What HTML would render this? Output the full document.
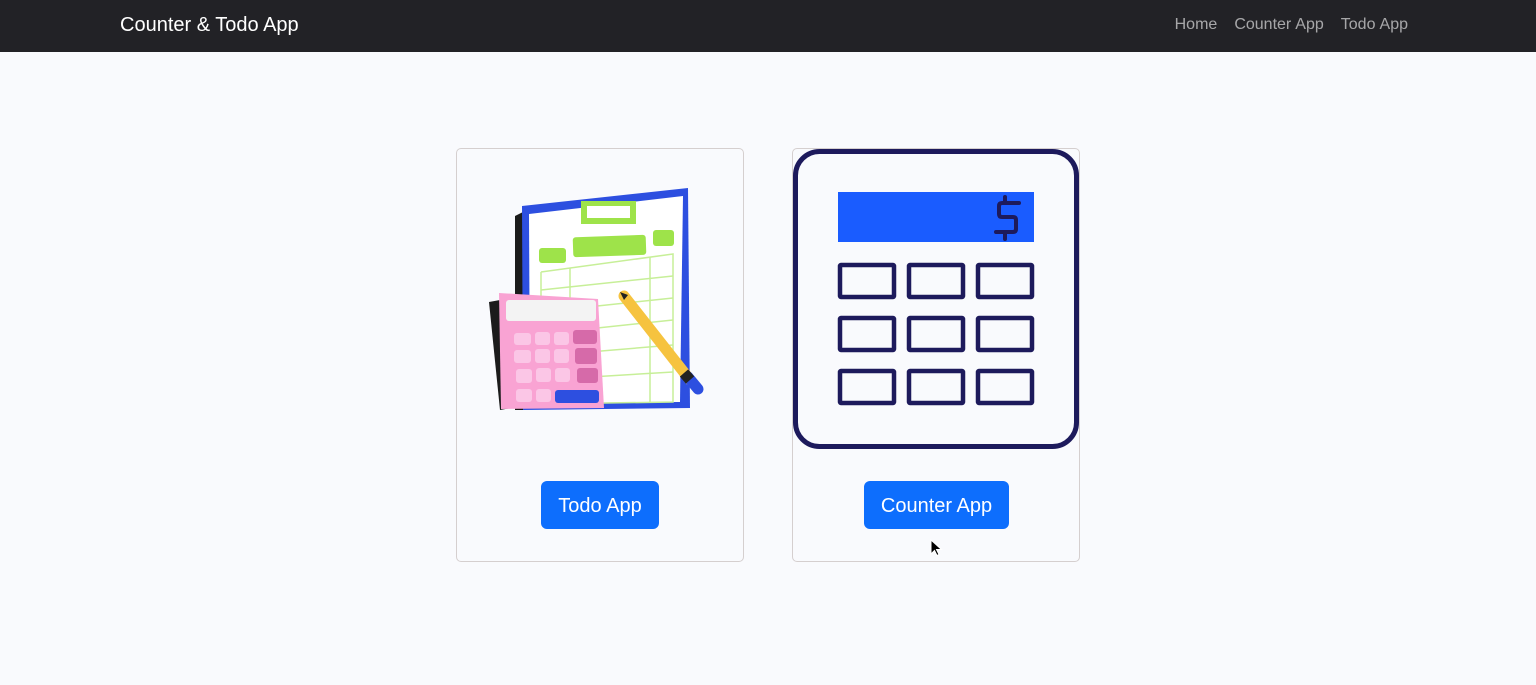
<!DOCTYPE html>
<html><head><meta charset="utf-8"><style>
*{margin:0;padding:0;box-sizing:border-box}
body{width:1536px;height:685px;background:#f9fafd;font-family:"Liberation Sans",sans-serif;position:relative;overflow:hidden}
.nav{position:absolute;left:0;top:0;width:1536px;height:52px;background:#222226}
.brand{position:absolute;left:120px;top:14px;color:#fff;font-size:20px}
.links{position:absolute;right:128px;top:16px;color:rgba(255,255,255,.6);font-size:16px;word-spacing:0.5px}
.links span{margin-left:17px}
.card{position:absolute;top:148px;width:288px;height:414px;border:1px solid #d5cfcf;border-radius:5px}
.btn{position:absolute;top:481px;height:48px;background:#0d6efd;color:#fff;font-size:20px;border-radius:6px;text-align:center;line-height:50px}
svg{position:absolute;left:0;top:0}
</style></head><body>
<div class="nav"><div class="brand">Counter &amp; Todo App</div>
<div class="links"><span>Home</span><span>Counter App</span><span>Todo App</span></div></div>
<div class="card" style="left:456px"></div>
<div class="card" style="left:792px"></div>
<svg width="1536" height="685">
<polygon points="515,216 523,212 523,410 515,410" fill="#1b1b1b"/>
<polygon points="522,206 688,188 690,408 523,410" fill="#2d4fe0"/>
<polygon points="529,214 683,196 680,402 530,403" fill="#fff"/>
<rect x="581" y="201" width="55" height="23" fill="#9ee34a"/>
<rect x="587" y="206" width="43" height="12" fill="#fff"/>
<rect x="539" y="248" width="27" height="15" rx="3" fill="#9ee34a"/>
<rect x="573" y="236" width="73" height="20" rx="3" fill="#9ee34a" transform="rotate(-2 610 246)"/>
<rect x="653" y="230" width="21" height="16" rx="3" fill="#9ee34a"/>
<g stroke="#c7ef98" stroke-width="1.5" fill="none">
<polyline points="541,272 673,254 673,402 541,404 541,272"/>
<line x1="541" y1="290" x2="673" y2="276"/><line x1="541" y1="312" x2="673" y2="298"/>
<line x1="541" y1="334" x2="673" y2="320"/><line x1="541" y1="356" x2="673" y2="345"/>
<line x1="541" y1="380" x2="673" y2="372"/><line x1="570" y1="268" x2="570" y2="404"/>
<line x1="650" y1="257" x2="650" y2="402"/>
</g>
<polygon points="489,302 500,300 511,408 500,410" fill="#1b1b1b"/>
<polygon points="499,293 598,299 604,408 501,409" fill="#f9a3d3"/>
<rect x="506" y="300" width="90" height="21" rx="3" fill="#f3f3f3"/>
<g fill="#fbc6e6">
<rect x="514" y="333" width="17" height="12" rx="3"/><rect x="535" y="332" width="15" height="13" rx="3"/><rect x="554" y="332" width="15" height="13" rx="3"/>
<rect x="514" y="350" width="17" height="13" rx="3"/><rect x="535" y="349" width="15" height="14" rx="3"/><rect x="554" y="349" width="15" height="14" rx="3"/>
<rect x="516" y="369" width="16" height="14" rx="3"/><rect x="536" y="368" width="15" height="14" rx="3"/><rect x="555" y="368" width="15" height="14" rx="3"/>
<rect x="516" y="389" width="16" height="13" rx="3"/><rect x="536" y="389" width="15" height="13" rx="3"/>
</g>
<g fill="#d66aa9">
<rect x="573" y="330" width="24" height="14" rx="3"/><rect x="575" y="348" width="22" height="16" rx="3"/><rect x="577" y="368" width="21" height="15" rx="3"/>
</g>
<rect x="555" y="390" width="44" height="13" rx="3" fill="#2d4fe0"/>
<line x1="624" y1="296" x2="690" y2="380" stroke="#f6c33f" stroke-width="11" stroke-linecap="round"/>
<line x1="688" y1="377" x2="698" y2="389" stroke="#2d4fe0" stroke-width="11" stroke-linecap="round"/>
<line x1="684" y1="373" x2="690" y2="380" stroke="#222" stroke-width="11"/>
<polygon points="620,292 628,295 624,300" fill="#222"/>
<rect x="795.5" y="151.5" width="281" height="295" rx="24" fill="none" stroke="#1d1a5c" stroke-width="5"/>
<rect x="838" y="192" width="196" height="50" fill="#1a5cff"/>
<path d="M1019,203 h-17 q-3,0 -3,3 v8 q0,3 3,3 h11 q3,0 3,3 v9 q0,3 -3,3 h-17 M1005,197 v6 M1005,233 v6" stroke="#1d1a5c" stroke-width="4" fill="none" stroke-linecap="round"/>
<g fill="none" stroke="#1d1a5c" stroke-width="4.5">
<rect x="840" y="265" width="54" height="32" rx="1"/><rect x="909" y="265" width="54" height="32" rx="1"/><rect x="978" y="265" width="54" height="32" rx="1"/>
<rect x="840" y="318" width="54" height="32" rx="1"/><rect x="909" y="318" width="54" height="32" rx="1"/><rect x="978" y="318" width="54" height="32" rx="1"/>
<rect x="840" y="371" width="54" height="32" rx="1"/><rect x="909" y="371" width="54" height="32" rx="1"/><rect x="978" y="371" width="54" height="32" rx="1"/>
</g>
<path d="M931,540 v14 l3.5,-3.5 l2.5,5 l2,-1 l-2.5,-5 h5 z" fill="#000" stroke="#fff" stroke-width="1"/>
</svg>
<div class="btn" style="left:541px;width:118px">Todo App</div>
<div class="btn" style="left:864px;width:145px">Counter App</div>
</body></html>
